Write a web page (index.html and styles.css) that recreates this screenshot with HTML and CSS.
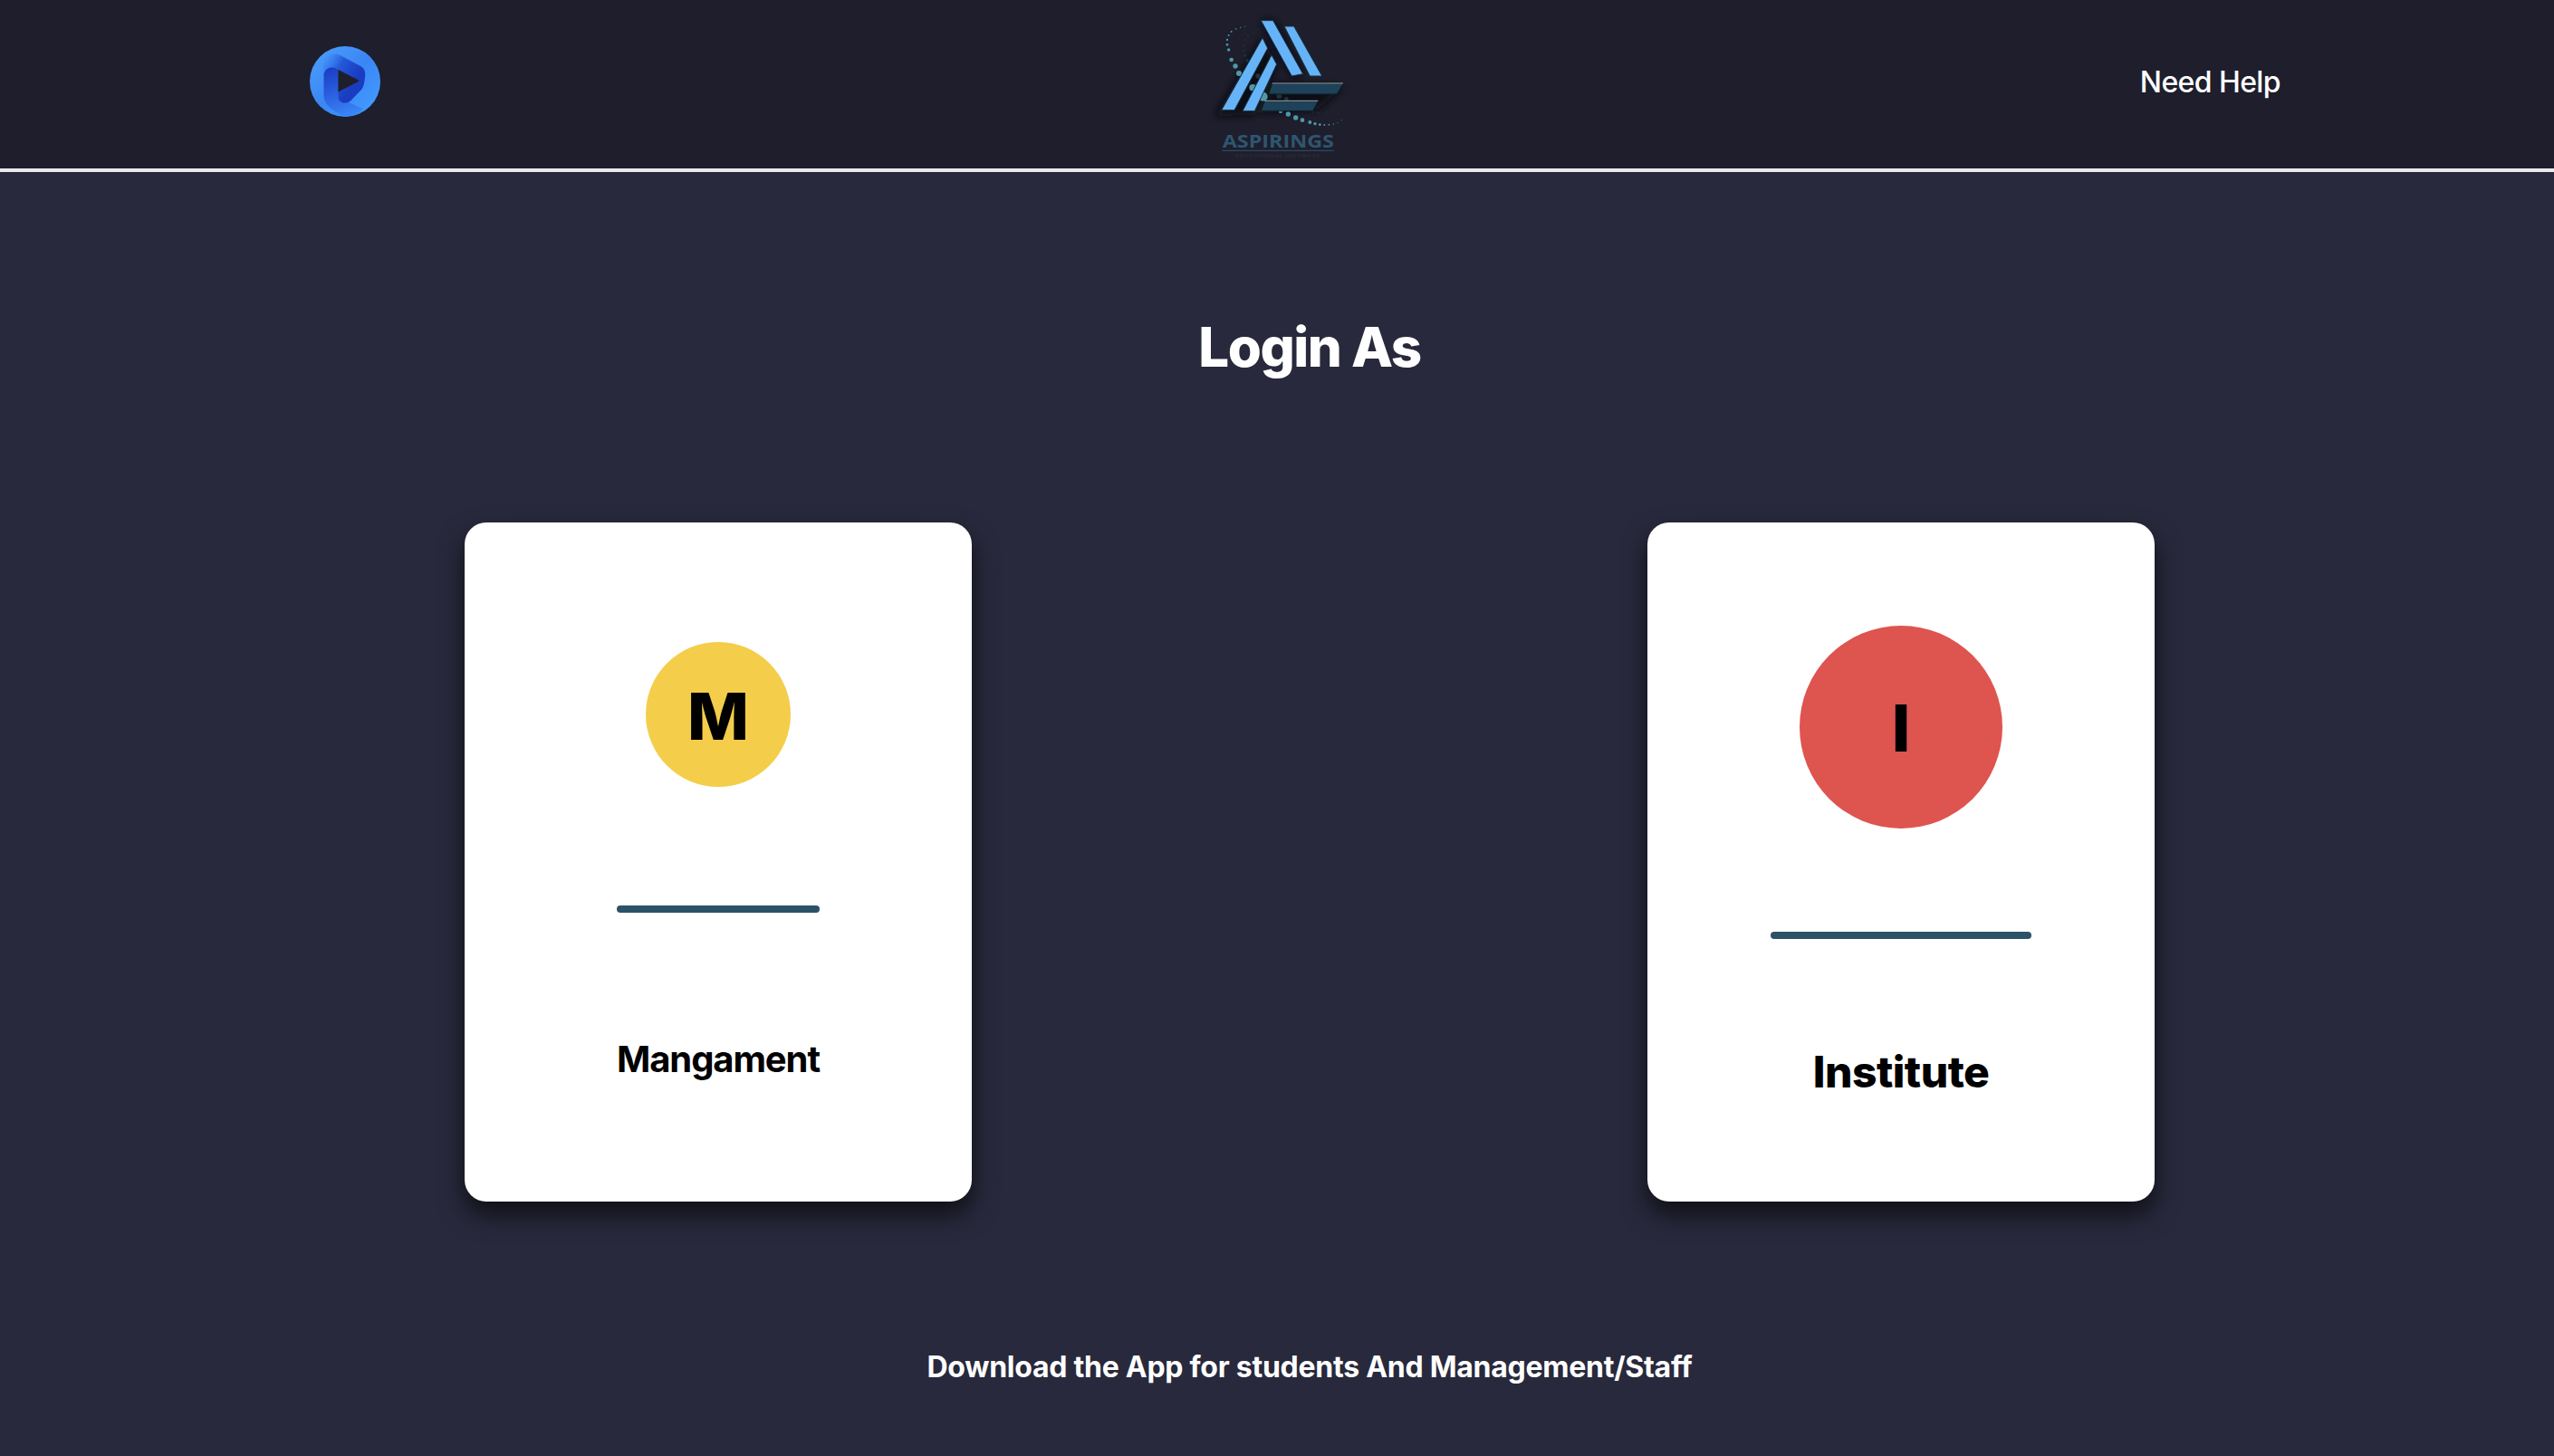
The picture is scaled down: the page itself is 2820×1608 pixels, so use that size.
FILE: index.html
```html
<!DOCTYPE html>
<html lang="en">
<head>
  <meta charset="UTF-8" />
  <meta name="viewport" content="width=device-width, initial-scale=1.0"/>
  <title>Aspirings Login</title>
  <link rel="stylesheet" href="styles.css">
</head>
<body>
  <header class="topbar">
    <svg class="brand-icon" viewBox="0 0 80 80" aria-label="App icon">
      <defs>
        <linearGradient id="discGrad" x1="0.1" y1="0.1" x2="0.9" y2="0.9">
          <stop offset="0" stop-color="#4a9bfb"/>
          <stop offset="0.5" stop-color="#3a86f4"/>
          <stop offset="1" stop-color="#429bff"/>
        </linearGradient>
        <linearGradient id="topBand" gradientUnits="userSpaceOnUse" x1="14" y1="14" x2="52" y2="36">
          <stop offset="0" stop-color="#3a85f3" stop-opacity="0"/>
          <stop offset="0.5" stop-color="#2458da"/>
          <stop offset="1" stop-color="#1a3cc2"/>
        </linearGradient>
        <linearGradient id="sideBand" gradientUnits="userSpaceOnUse" x1="24" y1="24" x2="42" y2="78">
          <stop offset="0" stop-color="#1b3cc4"/>
          <stop offset="0.5" stop-color="#2a5fdf"/>
          <stop offset="1" stop-color="#3a86f5"/>
        </linearGradient>
      </defs>
      <circle cx="40" cy="40" r="39" fill="url(#discGrad)"/>
      <path d="M32.300 26.700C27 23 19 23 16.500 32V56C17 64 24 72 39 78.500C47 79 55 76 60 70L44 63.300C38 64.500 33 62 32.300 58Z" fill="url(#sideBand)"/>
      <path d="M17 15C23 10 29 8.500 34 10.700L57 23C61.500 25.500 63 30 62 35C61.500 40 61 45 58.500 48.500L46 61.500C41 65.500 34 64 32.300 58V51.700L55.700 39.300L32.300 26.700C27 23 19.500 23.500 16.500 32C15.500 26 15.500 20 17 15Z" fill="url(#topBand)"/>
      <path d="M32.300 26.700L54.500 38.300C55.900 39 55.900 39.700 54.500 40.300L32.300 51.700Z" fill="#1e1e2c"/>
    </svg>

    <svg class="brand-logo" viewBox="12 0 600 540" aria-label="Aspirings logo">
      <defs>
        <filter id="logoShadow" x="-50%" y="-50%" width="200%" height="200%">
          <feGaussianBlur stdDeviation="14"/>
        </filter>
      </defs>
      <g fill="#0c0c12" filter="url(#logoShadow)">
        <polygon points="258,125 275,160 305,213 232,380 100,385 122,350"/>
        <polygon points="253,68 293,68 392,245 355,252"/>
        <polygon points="290,277 525,290 442,360 252,375"/>
      </g>
      <g fill="#22313c">
        <circle cx="240" cy="98" r="2"/><circle cx="225" cy="108" r="2.500"/><circle cx="210" cy="118" r="3"/><circle cx="200" cy="132" r="3"/><circle cx="195" cy="150" r="3.500"/><circle cx="197" cy="168" r="3.500"/><circle cx="200" cy="184" r="4"/><circle cx="207" cy="200" r="5"/><circle cx="243" cy="252" r="8"/><circle cx="240" cy="285" r="9"/><circle cx="313" cy="318" r="9"/><circle cx="337" cy="328" r="7"/><circle cx="425" cy="372" r="2.500"/><circle cx="442" cy="373" r="2.500"/><circle cx="458" cy="373" r="2"/><circle cx="473" cy="371" r="2"/><circle cx="487" cy="367" r="1.500"/><circle cx="497" cy="362" r="1.500"/>
      </g>
      <g fill="#4f98a8">
        <circle cx="200" cy="88" r="1.500"/><circle cx="185" cy="91" r="2"/><circle cx="170" cy="96" r="2.500"/><circle cx="155" cy="105" r="3"/><circle cx="146" cy="117" r="3"/><circle cx="141" cy="132" r="3.500"/><circle cx="141" cy="148" r="4"/><circle cx="146" cy="165" r="5"/><circle cx="155" cy="198" r="7"/><circle cx="168" cy="219" r="8"/><circle cx="180" cy="243" r="9"/><circle cx="225" cy="290" r="11"/><circle cx="260" cy="320" r="15"/><circle cx="318" cy="368" r="7"/><circle cx="343" cy="378" r="8"/><circle cx="368" cy="390" r="8"/><circle cx="390" cy="398" r="7"/><circle cx="415" cy="405" r="6"/><circle cx="432" cy="410" r="5"/><circle cx="448" cy="413" r="4"/><circle cx="463" cy="414" r="3"/><circle cx="478" cy="413" r="2.500"/><circle cx="493" cy="411" r="2"/><circle cx="507" cy="406" r="1.500"/><circle cx="520" cy="398" r="1.500"/>
      </g>
      <g fill="#67b3f7" stroke="#14323f" stroke-width="3">
        <polygon points="253,68 293,68 392,245 355,252"/>
        <polygon points="330,87 362,87 455,252 415,252"/>
        <polygon points="258,125 275,160 165,365 122,365"/>
        <polygon points="288,182 305,213 232,368 192,368"/>
      </g>
      <g fill="#1d4259" stroke="#0f1a22" stroke-width="3">
        <polygon points="290,277 525,277 505,312 278,312"/>
        <polygon points="265,335 442,335 425,368 252,368"/>
      </g>
      <path d="M290 276H525M265 334H442" stroke="#9aa9a8" stroke-width="3"/>
      <text class="logo-name" x="125" y="488" textLength="370" lengthAdjust="spacingAndGlyphs">ASPIRINGS</text>
      <path d="M123 499H495" stroke="#2f5570" stroke-width="3"/>
      <text class="logo-sub" x="168" y="522" textLength="280" lengthAdjust="spacingAndGlyphs">EDUCATIONAL SOFTWARE</text>
    </svg>

    <a class="help-link" href="#">Need Help</a>
  </header>

  <main class="content">
    <h1 class="page-title">Login As</h1>

    <div class="card-row">
      <div class="login-card">
        <div class="avatar avatar-m">M</div>
        <div class="card-rule"></div>
        <div class="card-label">Mangament</div>
      </div>

      <div class="login-card login-card-big">
        <div class="avatar avatar-i">I</div>
        <div class="card-rule"></div>
        <div class="card-label">Institute</div>
      </div>
    </div>

    <p class="download-note">Download the App for students And Management/Staff</p>
  </main>
</body>
</html>
```

FILE: styles.css
```css
html, body {
  margin: 0;
  font-family: Inter, "Liberation Sans", sans-serif;
  color: #fff;
  background: #28293c;
}
.topbar {
  box-sizing: content-box;
  height: 180px;
  padding: 0 302px 6px 341px;
  display: flex;
  align-items: center;
  justify-content: space-between;
  background: #1e1e2c;
  border-bottom: 4px solid #e8e8ee;
}
.brand-icon {
  width: 80px;
  height: 80px;
}
.brand-logo {
  width: 200px;
  height: 180px;
  margin-left: 41px;
}
.logo-name {
  font-family: "Open Sans", sans-serif;
  font-size: 56px;
  font-weight: 700;
  fill: #2f5570;
}
.logo-sub {
  font-family: "Open Sans", sans-serif;
  font-size: 15px;
  font-weight: 700;
  fill: #2a2a36;
}
.help-link {
  color: #fff;
  font-size: 32px;
  font-weight: 500;
  letter-spacing: -0.6px;
  text-decoration: none;
}
.content {
  padding-left: 72px;
  text-align: center;
}
.page-title {
  margin: 0;
  padding: 157px 0 158px;
  font-size: 60px;
  font-weight: 800;
  letter-spacing: -1.5px;
}
.card-row {
  width: 1866px;
  margin: 0 auto;
  display: flex;
  justify-content: space-between;
}
.login-card {
  width: 560px;
  height: 750px;
  display: flex;
  flex-direction: column;
  align-items: center;
  justify-content: space-evenly;
  background: #fff;
  color: #000;
  border-radius: 24px;
  box-shadow: 0 14px 28px rgba(0, 0, 0, 0.65);
}
.avatar {
  box-sizing: border-box;
  width: 160px;
  height: 160px;
  border-radius: 50%;
  display: flex;
  align-items: center;
  justify-content: center;
  font-size: 72px;
  font-weight: 800;
}
.avatar-m {
  padding-top: 3px;
  background: #f4cd4a;
}
.avatar-i {
  width: 224px;
  height: 224px;
  background: #de544f;
}
.card-rule {
  width: 224px;
  height: 8px;
  border-radius: 8px;
  background: #2c5268;
}
.login-card-big .card-rule {
  width: 288px;
}
.card-label {
  padding-top: 3px;
  font-size: 40px;
  font-weight: 700;
  line-height: 53px;
  letter-spacing: -1.1px;
}
.login-card-big .card-label {
  font-size: 48px;
  font-weight: 800;
  line-height: 59px;
  letter-spacing: -0.5px;
}
.download-note {
  margin: 0;
  padding: 163px 0 78px;
  font-size: 32px;
  font-weight: 700;
  letter-spacing: -0.26px;
}
```
